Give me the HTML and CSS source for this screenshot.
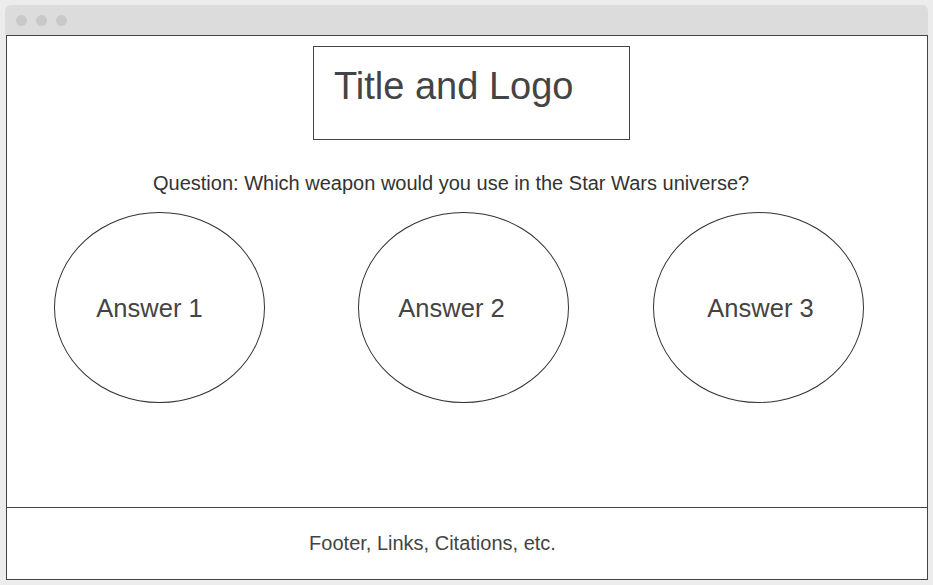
FILE: index.html
```html
<!DOCTYPE html>
<html>
<head>
<meta charset="utf-8">
<title>Wireframe</title>
<link rel="stylesheet" href="styles.css">
</head>
<body>
<div class="window">
  <div class="titlebar">
    <span class="dot"></span><span class="dot"></span><span class="dot"></span>
  </div>
  <div class="frame">
    <main class="main">
      <div class="title-box">Title and Logo</div>
      <p class="question">Question: Which weapon would you use in the Star Wars universe?</p>
      <div class="answers">
        <div class="answer answer-1">Answer 1</div>
        <div class="answer answer-2">Answer 2</div>
        <div class="answer answer-3">Answer 3</div>
      </div>
    </main>
    <footer class="footer">Footer, Links, Citations, etc.</footer>
  </div>
</div>
</body>
</html>
```
FILE: styles.css
```css
html, body {
  margin: 0;
  padding: 0;
}
body {
  background: #ececec;
  font-family: "Liberation Sans", Arial, sans-serif;
  color: #444;
  width: 933px;
  height: 585px;
  overflow: hidden;
}
.window {
  margin: 5px 0 0 5px;
  width: 923px;
}
.titlebar {
  height: 30px;
  background: #dcdcdc;
  border-radius: 6px 6px 0 0;
  display: flex;
  align-items: center;
  gap: 9px;
  padding-left: 11px;
  box-sizing: border-box;
}
.dot {
  width: 11px;
  height: 11px;
  border-radius: 50%;
  background: #c9c9c9;
}
.frame {
  margin-left: 1px;
  width: 922px;
  height: 545px;
  box-sizing: border-box;
  border: 1px solid #444;
  background: #fff;
  display: flex;
  flex-direction: column;
}
.main {
  height: 471px;
  border-bottom: 1px solid #444;
  display: flex;
  flex-direction: column;
}
.title-box {
  margin: 10px 0 0 306px;
  width: 317px;
  height: 94px;
  box-sizing: border-box;
  border: 1px solid #444;
  font-size: 38px;
  line-height: 42px;
  padding: 18px 0 0 20px;
  color: #444;
}
.question {
  margin: 32px 0 0 0;
  font-size: 20px;
  line-height: 22px;
  color: #333;
  padding-left: 146px;
}
.answers {
  display: flex;
  margin-top: 18px;
}
.answer {
  width: 211px;
  height: 191px;
  box-sizing: border-box;
  border: 1px solid #333;
  border-radius: 50%;
  display: flex;
  align-items: center;
  justify-content: center;
  font-size: 25.5px;
  padding-top: 2px;
  color: #444;
}
.answer-1 {
  margin-left: 47px;
  padding-right: 20px;
}
.answer-2 {
  margin-left: 93px;
  padding-right: 24px;
}
.answer-3 {
  margin-left: 84px;
  padding-left: 4px;
}
.footer {
  flex: 1;
  display: flex;
  align-items: center;
  justify-content: center;
  padding-right: 69px;
  font-size: 20px;
  color: #444;
}
```
